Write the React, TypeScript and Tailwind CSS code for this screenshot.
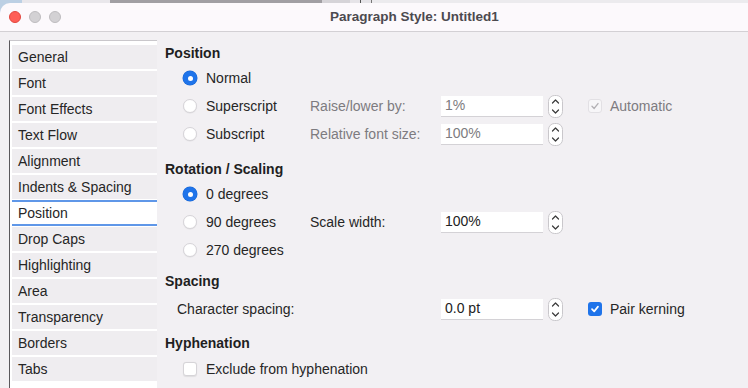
import React from "react";

const sideItems = [
  "General",
  "Font",
  "Font Effects",
  "Text Flow",
  "Alignment",
  "Indents & Spacing",
  "Position",
  "Drop Caps",
  "Highlighting",
  "Area",
  "Transparency",
  "Borders",
  "Tabs",
];

const Radio = ({ on }: { on?: boolean }) =>
  on ? (
    <span className="w-[14px] h-[14px] rounded-full bg-[#1f74ea] flex items-center justify-center shadow-[0_0_0_0.5px_#1a66d0]">
      <span className="w-[5px] h-[5px] rounded-full bg-white" />
    </span>
  ) : (
    <span className="w-[14px] h-[14px] rounded-full bg-white border border-[#d6d4d8] shadow-[0_0.5px_1px_rgba(0,0,0,0.08)]" />
  );

const Check = ({ state }: { state: "on" | "off" | "disabled" }) => {
  if (state === "on")
    return (
      <span className="w-[14px] h-[14px] rounded-[3px] bg-[#1f74ea] flex items-center justify-center">
        <svg width="10" height="10" viewBox="0 0 10 10">
          <path d="M2 5.2 L4.2 7.4 L8 2.6" fill="none" stroke="white" strokeWidth="1.7" strokeLinecap="round" strokeLinejoin="round" />
        </svg>
      </span>
    );
  if (state === "disabled")
    return (
      <span className="w-[14px] h-[14px] rounded-[3px] bg-[#f7f6f8] border border-[#e2e0e4] flex items-center justify-center">
        <svg width="10" height="10" viewBox="0 0 10 10">
          <path d="M2 5.2 L4.2 7.4 L8 2.6" fill="none" stroke="#b3b1b5" strokeWidth="1.4" strokeLinecap="round" strokeLinejoin="round" />
        </svg>
      </span>
    );
  return <span className="w-[14px] h-[14px] rounded-[3px] bg-white border border-[#d6d4d8] shadow-[0_0.5px_1px_rgba(0,0,0,0.08)]" />;
};

const Spinner = () => (
  <svg width="15" height="23" viewBox="0 0 15 23" className="ml-[5px]">
    <rect x="0.5" y="0.5" width="14" height="22" rx="6" fill="white" stroke="#c9c7cb" />
    <path d="M4.5 8 L7.5 5 L10.5 8" fill="none" stroke="#3a3a3a" strokeWidth="1.2" strokeLinecap="round" strokeLinejoin="round" />
    <path d="M4.5 15 L7.5 18 L10.5 15" fill="none" stroke="#3a3a3a" strokeWidth="1.2" strokeLinecap="round" strokeLinejoin="round" />
  </svg>
);

const Field = ({ value, dim }: { value: string; dim?: boolean }) => (
  <div className="flex items-center">
    <div
      className={`w-[102px] h-[21px] bg-white border-b border-[#d4d2d6] pl-[4px] flex items-center ${
        dim ? "text-[#7d7b80]" : "text-[#222]"
      }`}
    >
      {value}
    </div>
    <Spinner />
  </div>
);

const Heading = ({ children, className = "" }: { children: React.ReactNode; className?: string }) => (
  <div className={`h-[22px] flex items-center font-bold text-[#1f1f1f] ${className}`}>{children}</div>
);

const OptionRow = ({
  on,
  label,
  mid,
  midDim,
  field,
  fieldDim,
  check,
  checkLabel,
}: {
  on?: boolean;
  label: string;
  mid?: string;
  midDim?: boolean;
  field?: string;
  fieldDim?: boolean;
  check?: "on" | "off" | "disabled";
  checkLabel?: string;
}) => (
  <div className="h-[28px] flex items-center">
    <div className="w-[145px] flex items-center pl-[18px] gap-[9px]">
      <Radio on={on} />
      <span>{label}</span>
    </div>
    <div className={`w-[131px] ${midDim ? "text-[#7d7b80]" : ""}`}>{mid}</div>
    {field && <Field value={field} dim={fieldDim} />}
    {check && (
      <div className="flex items-center ml-[25px] gap-[8px]">
        <Check state={check} />
        <span className={check === "disabled" ? "text-[#7d7b80]" : ""}>{checkLabel}</span>
      </div>
    )}
  </div>
);

export default function App() {
  return (
    <div
      className="w-[748px] h-[388px] overflow-hidden bg-[#f2f0f3] text-[14px] text-[#262626]"
      style={{ fontFamily: '"Liberation Sans", Arial, sans-serif' }}
    >
      {/* desktop strip behind the window */}
      <div className="h-[3px] flex bg-[#ecebee]">
        <div className="w-[22px] bg-[#bcd0e4]" />
        <div className="w-[88px] bg-[#e9e7eb]" />
        <div className="w-[212px] bg-[#a19fa3]" />
        <div className="w-[28px] bg-[#d6d4d8]" />
        <div className="w-[10px] bg-[#e6e4e8]" />
        <div className="w-[1px] bg-[#555]" />
        <div className="w-[10px] bg-[#e6e4e8]" />
        <div className="w-[1px] bg-[#777]" />
      </div>

      <div className="bg-[#bcd0e4]">
        <div className="h-[29px] bg-[#fcf9fc] rounded-tl-[10px] border-b border-[#d3d0d4] flex items-center relative">
          <div className="flex items-center gap-[8px] pl-[9px]">
            <span className="w-[12px] h-[12px] rounded-full bg-[#fe5f57] border border-[#e2473f]" />
            <span className="w-[12px] h-[12px] rounded-full bg-[#d3d1d4] border border-[#bebcbf]" />
            <span className="w-[12px] h-[12px] rounded-full bg-[#d3d1d4] border border-[#bebcbf]" />
          </div>
          <div className="ml-[269px] text-[13.5px] font-bold text-[#4c4a4f]">Paragraph Style: Untitled1</div>
        </div>
      </div>

      <div className="flex">
        {/* category list */}
        <div className="ml-[9px] mt-[8px] w-[148px] border-l border-[#5a585c] border-t border-t-[#c9c7cb] bg-white h-[360px] pt-[4px] pl-[2px]">
          {sideItems.map((item) =>
            item === "Position" ? (
              <div
                key={item}
                className="h-[26px] bg-white border-y-[2px] border-[#5f97e8] flex items-center pl-[6px] -mt-[1px] mb-[1px]"
              >
                {item}
              </div>
            ) : (
              <div key={item} className="h-[24px] mb-[2px] bg-[#efedf0] flex items-center pl-[6px]">
                {item}
              </div>
            )
          )}
        </div>

        {/* page */}
        <div className="ml-[8px] pt-[10px] flex flex-col">
          <Heading>Position</Heading>
          <OptionRow on label="Normal" />
          <OptionRow
            label="Superscript"
            mid="Raise/lower by:"
            midDim
            field="1%"
            fieldDim
            check="disabled"
            checkLabel="Automatic"
          />
          <OptionRow label="Subscript" mid="Relative font size:" midDim field="100%" fieldDim />

          <Heading className="mt-[10px]">Rotation / Scaling</Heading>
          <OptionRow on label="0 degrees" />
          <OptionRow label="90 degrees" mid="Scale width:" field="100%" />
          <OptionRow label="270 degrees" />

          <Heading className="mt-[6px]">Spacing</Heading>
          <div className="h-[28px] mt-[3px] flex items-center">
            <div className="w-[276px] pl-[12px]">Character spacing:</div>
            <Field value="0.0 pt" />
            <div className="flex items-center ml-[25px] gap-[8px]">
              <Check state="on" />
              <span>Pair kerning</span>
            </div>
          </div>

          <Heading className="mt-[9px]">Hyphenation</Heading>
          <div className="h-[28px] mt-[1px] flex items-center pl-[18px] gap-[9px]">
            <Check state="off" />
            <span>Exclude from hyphenation</span>
          </div>
        </div>
      </div>
    </div>
  );
}
